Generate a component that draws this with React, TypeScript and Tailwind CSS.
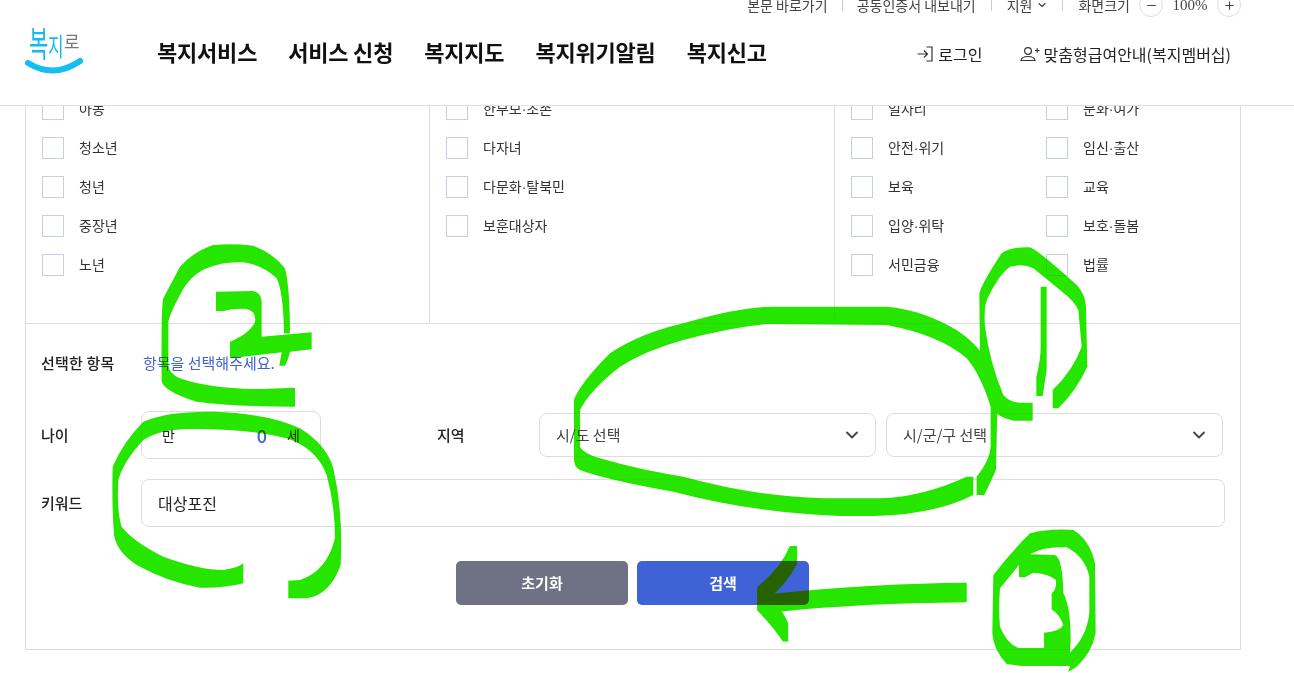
import React from 'react';
import { ChevronDown, Minus, Plus } from 'lucide-react';

const targets = [
  { x: 'w-[404px]', items: ['아동', '청소년', '청년', '중장년', '노년'] },
  { x: 'w-[405px]', items: ['한부모·조손', '다자녀', '다문화·탈북민', '보훈대상자'] },
];

const themes = [
  ['일자리', '문화·여가'],
  ['안전·위기', '임신·출산'],
  ['보육', '교육'],
  ['입양·위탁', '보호·돌봄'],
  ['서민금융', '법률'],
];

function Check({ label, className = '' }: { label: string; className?: string }) {
  return (
    <label className={`flex items-center h-[22px] ${className}`}>
      <span className="w-[22px] h-[22px] border border-[#c6cfe0] bg-white shrink-0" />
      <span className="ml-[15px] text-[14px] text-[#333] font-['Liberation_Sans','Noto_Sans_CJK_KR',sans-serif]">{label}</span>
    </label>
  );
}

function Logo() {
  const font = "'Noto Sans CJK KR', sans-serif";
  return (
    <svg width="64" height="56" viewBox="0 0 64 56" className="block">
      <text fontSize="21" fill="#14b9ee" fontFamily={font} transform="translate(4 34) scale(1 1.7)">복</text>
      <text fontSize="17" fill="#14b9ee" fontFamily={font} transform="translate(23 33) scale(1 1.5)">지</text>
      <text fontSize="17" fill="#77777f" fontFamily={font} transform="translate(39 26) scale(1 1.1)">로</text>
      <path d="M3 40 Q 29 56 55 38" fill="none" stroke="#14bdf2" strokeWidth="6" strokeLinecap="round" />
    </svg>
  );
}

function Scribbles() {
  const green = '#26e600';
  return (
    <svg viewBox="0 0 1294 673" className="absolute inset-0 w-[1294px] h-[673px] z-20 pointer-events-none mix-blend-darken" fill={green}>
      {/* 2 */}
      <g transform="translate(100 235) scale(0.3333)">
        <path d="M585 458 L480 462 Q330 462 240 430 Q205 415 205 390 L205 260 Q210 235 240 180 Q270 120 320 100 Q370 78 430 82 Q490 90 530 130 Q550 170 552 295 L570 295 Q570 160 555 100 Q520 55 460 32 Q400 25 340 30 Q280 50 240 95 L190 190 Q183 210 185 440 Q195 470 290 500 Q400 515 585 515 Z" />
        <path d="M348 170 L460 168 Q485 175 485 200 L485 305 L635 292 L635 343 L570 350 Q565 375 555 392 L538 392 L545 352 L390 370 L390 320 Q450 295 465 260 Q470 230 440 222 Q400 220 370 228 L348 228 Z" />
      </g>
      {/* age and keyword circle */}
      <g transform="translate(100 405) scale(0.3333)">
        <path d="M430 475 L430 535 Q370 550 300 548 Q200 530 110 480 Q50 440 42 390 Q35 300 38 185 Q70 110 130 50 Q200 18 340 20 Q500 25 600 70 Q680 120 700 190 Q730 320 722 480 Q690 570 620 580 L565 580 L565 527 L600 525 Q680 500 705 400 Q705 300 680 210 Q650 130 560 100 Q440 70 270 72 Q180 72 130 105 Q70 170 55 225 Q50 320 65 365 Q100 410 190 455 Q300 495 370 495 Q410 490 430 475 Z" />
      </g>
      {/* region oval */}
      <g transform="translate(540 300) scale(0.3333)">
        <path d="M1300 530 L1300 585 Q1180 645 1000 648 L900 648 Q650 640 400 575 Q200 540 120 510 Q100 500 102 470 L102 300 Q120 250 210 160 Q300 100 430 70 Q600 20 700 20 L1040 20 Q1150 30 1250 90 Q1310 130 1340 180 Q1370 250 1372 330 L1368 510 Q1350 550 1333 585 L1310 585 L1310 530 Q1350 480 1352 440 L1352 320 Q1320 220 1280 175 Q1200 105 1040 75 L680 72 Q560 85 430 120 Q320 150 240 200 Q150 270 120 330 L120 440 Q130 460 180 475 Q300 510 430 530 Q650 590 850 595 L1020 595 Q1150 590 1280 530 Z" />
      </g>
      {/* 1 */}
      <g transform="translate(960 230) scale(0.3333)">
        <path d="M218 518 L218 572 L160 572 Q110 560 105 540 Q70 450 60 370 L58 190 Q65 160 125 70 Q150 50 210 52 Q240 65 350 165 Q375 190 378 230 L382 410 Q350 480 295 535 L278 535 L278 480 Q340 420 365 350 L355 240 Q345 215 300 180 L220 115 Q190 100 150 110 Q120 130 85 200 Q70 225 75 290 Q90 400 130 495 Q150 518 180 518 Z" />
        <path d="M242 170 L260 170 L260 420 L248 498 L229 498 L229 440 Q242 390 242 350 Z" />
      </g>
      {/* arrow */}
      <g transform="translate(430 530) scale(0.3571)">
        <path d="M1503 148 L1503 202 Q1200 205 985 228 Q1000 250 1003 262 L1003 312 L988 312 Q960 270 916 225 L916 160 Q980 110 1008 45 L1028 45 L1028 95 Q1000 145 965 178 Q1250 150 1503 148 Z" />
      </g>
      {/* 3 */}
      <g transform="translate(950 520) scale(0.3333)">
        <path fillRule="evenodd" d="M130 165 Q180 100 240 40 Q300 25 370 30 Q420 60 435 130 L437 340 Q425 400 380 440 L355 456 L360 438 L215 438 L170 432 Q130 390 127 340 Z M207 135 L150 205 Q145 270 150 320 Q170 370 205 384 L282 384 L282 338 Q330 335 340 315 Q330 285 305 268 L305 220 Q320 210 318 180 Q295 160 250 158 L225 172 L207 172 Z M240 103 L315 105 Q338 115 340 220 Q362 260 362 360 L360 398 Q410 350 418 280 L418 170 Q405 110 350 82 Q280 78 240 103 Z" />
      </g>
    </svg>
  );
}

export default function App() {
  return (
    <div className="relative h-[673px] overflow-hidden bg-white text-[#222] font-['Noto_Sans_CJK_KR',sans-serif]">
      {/* HEADER */}
      <header className="relative z-10 h-[106px] overflow-hidden bg-white border-b border-[#dcdfe6]">
        <div className="flex items-center justify-end h-[24px] -mt-[7px] pr-[53px] text-[14px] text-[#444] leading-none">
          <span>본문 바로가기</span>
          <span className="w-px h-[12px] bg-[#ccc] mx-[14px]" />
          <span>공동인증서 내보내기</span>
          <span className="w-px h-[12px] bg-[#ccc] mx-[15px]" />
          <span>지원</span>
          <ChevronDown className="w-[12px] h-[12px] ml-[4px]" strokeWidth={2.2} />
          <span className="w-px h-[12px] bg-[#ccc] ml-[14px] mr-[15px]" />
          <span>화면크기</span>
          <span className="w-[24px] h-[24px] ml-[9px] rounded-full border border-[#ddd] flex items-center justify-center">
            <Minus className="w-[13px] h-[13px]" />
          </span>
          <span className="w-[54px] text-center font-['Liberation_Serif',serif] text-[15px]">100%</span>
          <span className="w-[24px] h-[24px] rounded-full border border-[#ddd] flex items-center justify-center">
            <Plus className="w-[13px] h-[13px]" />
          </span>
        </div>
        <div className="flex items-center h-[60px] mt-[4px] pl-[25px]">
          <div className="w-[132px] shrink-0">
            <Logo />
          </div>
          <nav className="flex gap-[31px] text-[22px] font-bold text-[#111] leading-none tracking-[-0.2px]">
            <span>복지서비스</span>
            <span>서비스 신청</span>
            <span>복지지도</span>
            <span>복지위기알림</span>
            <span>복지신고</span>
          </nav>
          <div className="ml-auto mt-[6px] pr-[63px] flex items-center text-[16px] text-[#222] leading-none">
            <svg width="16" height="16" viewBox="0 0 16 16" fill="none" stroke="#333" strokeWidth="1.2" className="mr-[5px]">
              <path d="M0.5 8 H10.5 M7 4.5 L10.5 8 L7 11.5 M9.5 1 H15 V15 H9.5" />
            </svg>
            <span>로그인</span>
            <svg width="20" height="16" viewBox="0 0 20 16" fill="none" stroke="#333" strokeWidth="1.2" className="ml-[37px] mr-[4px]">
              <circle cx="8" cy="5" r="3.4" />
              <path d="M1 14.5 Q1.5 10.5 8 10.5 Q14.5 10.5 15 14.5 Z M15 4.5 H19.5 M17.2 2.2 V6.8" />
            </svg>
            <span>맞춤형급여안내(복지멤버십)</span>
          </div>
        </div>
      </header>

      {/* FILTER PANEL */}
      <main className="relative ml-[25px] w-[1216px] h-[563px] -mt-[19px] border-x border-b border-[#dcdcdc]">
        <div className="flex h-[237px] border-b border-[#dcdcdc]">
          {targets.map((col) => (
            <div key={col.x} className={`${col.x} shrink-0 border-r border-[#d8dce4] pl-[16px] pt-[11px] flex flex-col gap-[17px]`}>
              {col.items.map((item) => (
                <Check key={item} label={item} />
              ))}
            </div>
          ))}
          <div className="flex-1 pl-[16px] pt-[11px] flex flex-col gap-[17px]">
            {themes.map((row) => (
              <div key={row[0]} className="flex">
                <Check label={row[0]} className="w-[195px]" />
                <Check label={row[1]} />
              </div>
            ))}
          </div>
        </div>

        <div className="pl-[15px] pr-[15px] pt-[27px]">
          <div className="flex items-center h-[24px] text-[15px]">
            <span className="w-[102px] font-medium tracking-[0.2px]">선택한 항목</span>
            <span className="text-[#3f62d7]">항목을 선택해주세요.</span>
          </div>

          <div className="flex items-center h-[48px] mt-[36px] text-[15px]">
            <span className="w-[100px] font-medium">나이</span>
            <div className="w-[180px] h-[48px] border border-[#dddddd] rounded-[8px] flex items-center pl-[20px] pr-[20px] text-[14px]">
              <span>만</span>
              <span className="ml-auto mr-[20px] text-[#3f62d7] text-[18px] font-medium">0</span>
              <span>세</span>
            </div>
            <span className="w-[102px] ml-[116px] font-medium">지역</span>
            <div className="w-[337px] h-[44px] border border-[#dddddd] rounded-[8px] flex items-center justify-between pl-[16px] pr-[13px] text-[#444] text-[15px]">
              <span>시/도 선택</span>
              <ChevronDown className="w-[20px] h-[20px]" strokeWidth={2.2} />
            </div>
            <div className="w-[337px] h-[44px] ml-[10px] border border-[#dddddd] rounded-[8px] flex items-center justify-between pl-[16px] pr-[13px] text-[#444] text-[15px]">
              <span>시/군/구 선택</span>
              <ChevronDown className="w-[20px] h-[20px]" strokeWidth={2.2} />
            </div>
          </div>

          <div className="flex items-center h-[48px] mt-[20px] text-[15px]">
            <span className="w-[100px] font-medium">키워드</span>
            <div className="flex-1 h-[48px] border border-[#dddddd] rounded-[8px] flex items-center pl-[16px] text-[16px]">대상포진</div>
          </div>

          <div className="flex justify-center gap-[9px] mt-[34px] pr-[1px] text-[15px] font-bold text-white">
            <button className="w-[172px] h-[44px] rounded-[5px] bg-[#6f7184]">초기화</button>
            <button className="w-[172px] h-[44px] rounded-[5px] bg-[#3f62d7]">검색</button>
          </div>
        </div>
      </main>

      <Scribbles />
    </div>
  );
}
